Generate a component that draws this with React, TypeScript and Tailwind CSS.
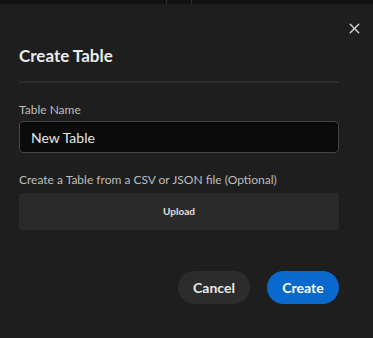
import { X } from "lucide-react";

export default function App() {
  return (
    <div
      className="w-[373px] h-[338px] bg-[#1e1e1e] flex flex-col overflow-hidden"
      style={{ fontFamily: 'Lato, "Noto Sans", sans-serif' }}
    >
      {/* strip of the page behind the modal */}
      <div className="h-[4px] bg-[#121212] flex">
        <div className="w-[166px]" />
        <div className="w-px bg-[#2e2e2e]" />
        <div className="w-[24px]" />
        <div className="w-px bg-[#2e2e2e]" />
      </div>

      <div className="relative flex-1 px-[19px] pr-[34px]">
        <button className="absolute right-[10px] top-[16px] text-[#cfcfcf]">
          <X size={17} strokeWidth={2} />
        </button>

        <h2 className="mt-[40px] text-[17px] leading-[24px] font-bold text-[#ececec]">Create Table</h2>
        <div className="mt-[13px] h-[2px] bg-[#2c2c2c]" />

        <label className="block mt-[18px] text-[12px] leading-[18px] text-[#bdbdbd]">Table Name</label>
        <div className="mt-[2px] h-[32px] rounded-[4px] border border-[#444] bg-[#0b0b0b] flex items-center px-[11px] text-[14px] text-[#e6e6e6]">
          New Table
        </div>

        <p className="mt-[18px] text-[12px] leading-[18px] text-[#bdbdbd]">
          Create a Table from a CSV or JSON file (Optional)
        </p>
        <div className="mt-[4px] h-[37px] rounded-[4px] bg-[#2a2a2a] flex items-center justify-center text-[10px] font-bold text-[#e0e0e0]">
          Upload
        </div>

        <div className="mt-[41px] flex justify-end gap-[17px]">
          <button className="h-[33px] w-[72px] rounded-full bg-[#2c2c2c] text-[14px] font-bold text-[#e8e8e8]">
            Cancel
          </button>
          <button className="h-[33px] w-[72px] rounded-full bg-[#0a69cc] text-[14px] font-bold text-white">
            Create
          </button>
        </div>
      </div>
    </div>
  );
}
